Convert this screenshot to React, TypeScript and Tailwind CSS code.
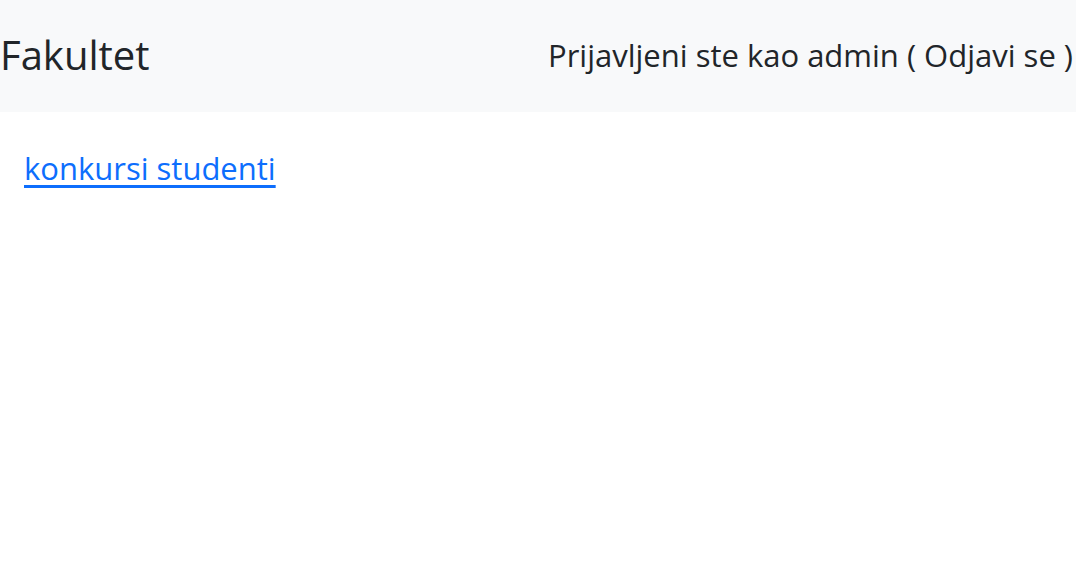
import React from 'react';

export default function App() {
  return (
    <div className="min-h-screen bg-white text-[#212529]" style={{ fontFamily: '"Open Sans", "Noto Sans", sans-serif' }}>
      <nav className="flex h-[112px] items-center justify-between bg-[#f8f9fa]">
        <a href="#" className="pb-[2px] text-[40px] leading-none text-[#212529] no-underline">
          Fakultet
        </a>
        <span className="pr-[3px] pb-[2px] text-[31px] leading-none">
          Prijavljeni ste kao admin ( <a href="#" className="text-[#212529] no-underline">Odjavi se</a> )
        </span>
      </nav>
      <main className="px-6 pt-[34px]">
        <a href="#" className="text-[31px] leading-[44px] text-[#0d6efd] underline underline-offset-[5px]">
          konkursi studenti
        </a>
      </main>
    </div>
  );
}
